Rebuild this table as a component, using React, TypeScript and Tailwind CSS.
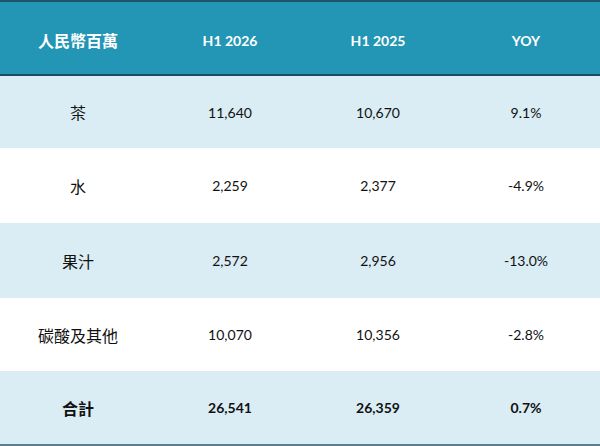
import React from "react";

const rows = [
  { name: "茶", a: "11,640", b: "10,670", y: "9.1%", bg: "bg-[#daedf4]", h: "h-[72px]" },
  { name: "水", a: "2,259", b: "2,377", y: "-4.9%", bg: "bg-white", h: "h-[75px]" },
  { name: "果汁", a: "2,572", b: "2,956", y: "-13.0%", bg: "bg-[#daedf4]", h: "h-[75px]" },
  { name: "碳酸及其他", a: "10,070", b: "10,356", y: "-2.8%", bg: "bg-white", h: "h-[73px]" },
];

const font = { fontFamily: 'Lato, "Noto Sans CJK TC", sans-serif' };

export default function App() {
  return (
    <div className="w-[600px] h-[446px] bg-white overflow-hidden" style={font}>
      <div className="border-t-2 border-[#1d5468] bg-[#2296b4] h-[74px] grid grid-cols-[156px_148px_148px_148px] items-center text-white font-bold pt-[4px]">
        <div className="text-center text-[16px]" style={{ fontFamily: '"Noto Sans CJK TC", sans-serif' }}>人民幣百萬</div>
        <div className="text-center text-[14px]">H1 2026</div>
        <div className="text-center text-[14px]">H1 2025</div>
        <div className="text-center text-[14px]">YOY</div>
      </div>
      <div className="h-[2px] bg-[#1b4b5f]" />
      {rows.map((r) => (
        <div key={r.name} className={`${r.bg} ${r.h} grid grid-cols-[156px_148px_148px_148px] items-center text-[#111]`}>
          <div className="text-center text-[16px]" style={{ fontFamily: '"Noto Sans CJK TC", sans-serif' }}>{r.name}</div>
          <div className="text-center text-[14px]">{r.a}</div>
          <div className="text-center text-[14px]">{r.b}</div>
          <div className="text-center text-[14px]">{r.y}</div>
        </div>
      ))}
      <div className="bg-[#daedf4] h-[73px] grid grid-cols-[156px_148px_148px_148px] items-center text-[#111] font-bold border-b-2 border-[#5c7d8b] box-content">
        <div className="text-center text-[16px]" style={{ fontFamily: '"Noto Sans CJK TC", sans-serif' }}>合計</div>
        <div className="text-center text-[14px]">26,541</div>
        <div className="text-center text-[14px]">26,359</div>
        <div className="text-center text-[14px]">0.7%</div>
      </div>
    </div>
  );
}
